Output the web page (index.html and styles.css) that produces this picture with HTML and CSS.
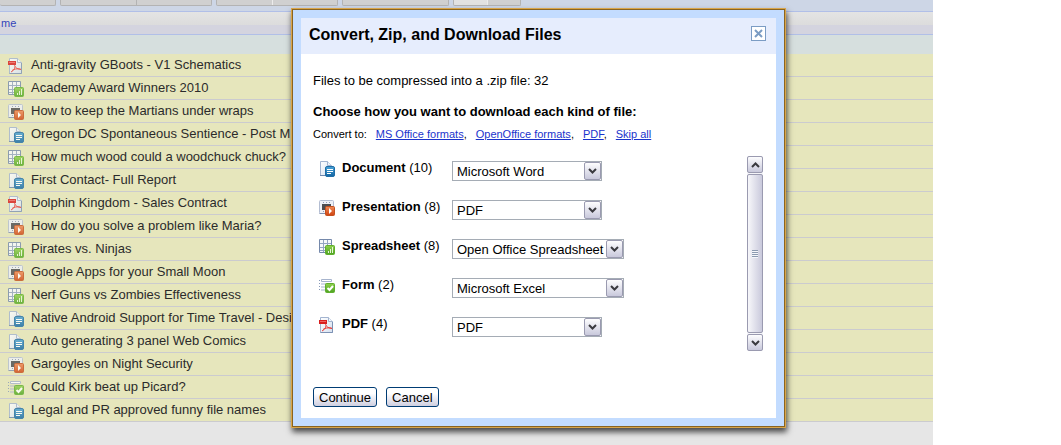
FILE: index.html
```html
<!DOCTYPE html>
<html lang="en">
<head>
    <meta charset="UTF-8">
    <meta name="viewport" content="width=device-width, initial-scale=1.0">
    <title>Convert, Zip, and Download Files</title>

    <link rel="stylesheet" href="styles.css">
</head>
<body>

    <!-- File type icons -->
    <svg class="sprite" width="0" height="0">
        <defs>
            <linearGradient id="blueFill" x1="0" y1="0" x2="0" y2="1"><stop offset="0" stop-color="#4aa3d8"/><stop offset="1" stop-color="#1265a3"/></linearGradient>
            <linearGradient id="orangeFill" x1="0" y1="0" x2="0" y2="1"><stop offset="0" stop-color="#f08a55"/><stop offset="1" stop-color="#cf4310"/></linearGradient>
            <linearGradient id="greenFill" x1="0" y1="0" x2="0" y2="1"><stop offset="0" stop-color="#8fd04c"/><stop offset="1" stop-color="#4ea321"/></linearGradient>
            <linearGradient id="paperFill" x1="0" y1="0" x2="1" y2="1"><stop offset="0" stop-color="#ffffff"/><stop offset="1" stop-color="#d5e0ef"/></linearGradient>
        </defs>
        <symbol id="document" viewBox="0 0 16 16">
            <path d="M1.500 .5h7l4 4v10h-11z" fill="url(#paperFill)" stroke="#a3b4d0"/>
            <path d="M1 14.500h7" stroke="#6b86ad"/>
            <path d="M8.500 .5v4h4" fill="#eef3fa" stroke="#a3b4d0"/>
            <rect x="6.500" y="5.500" width="9" height="10" rx="1.500" fill="url(#blueFill)" stroke="#1f6da6"/>
            <path d="M8 8.500h6M8 10.500h6M8 12.500h4" stroke="#fff"/>
        </symbol>
        <symbol id="presentation" viewBox="0 0 16 16">
            <rect x=".5" y=".5" width="14" height="13" rx="1" fill="#eef0f6" stroke="#b3bdd2"/>
            <path d="M.5 13.500h7" stroke="#8090b0"/>
            <path d="M4 2.500h1M7 2.500h1M10 2.500h1M4 11.500h1" stroke="#8d9bb8"/>
            <rect x="3" y="4" width="9" height="6" fill="#4c4c50"/>
            <rect x="6.500" y="6.500" width="9" height="9" rx="1" fill="url(#orangeFill)" stroke="#c4501f"/>
            <path d="M10 8v6l3-3z" fill="#fff"/>
        </symbol>
        <symbol id="spreadsheet" viewBox="0 0 16 16">
            <path d="M.5 .5h12v13H.5z" fill="#f7f9fc"/>
            <path d="M4.500 0v14M8.500 0v14M0 4.500h13M0 8.500h13M0 11.500h13" stroke="#93a5c2"/>
            <path d="M.5 .5h12v13H.5z" fill="none" stroke="#7589ab"/>
            <rect x="6.500" y="6.500" width="9" height="9" rx="1" fill="url(#greenFill)" stroke="#5fae2d"/>
            <path d="M9.500 12v2M11.500 10v4M13.500 8v6" stroke="#e6f7d8"/>
        </symbol>
        <symbol id="form" viewBox="0 0 16 16">
            <path d="M0 2.500h1M0 5.500h1M0 8.500h1M0 11.500h1" stroke="#8799b8"/>
            <path d="M2.500 1.500h10v2h-10z" fill="#fff" stroke="#a7b4cd"/>
            <path d="M2 6h9M2 9h5M2 12h5" stroke="#a7b4cd"/>
            <rect x="6.500" y="5.500" width="9" height="9" rx="1" fill="url(#greenFill)" stroke="#5fae2d"/>
            <path d="M8.500 10l2 2 3.500-4" fill="none" stroke="#fff" stroke-width="2"/>
        </symbol>
        <symbol id="pdf" viewBox="0 0 16 16">
            <path d="M1.500 .5h8l4 4v11h-12z" fill="url(#paperFill)" stroke="#a3b4d0"/>
            <path d="M9.500 .5v4h4" fill="#f4f7fb" stroke="#a3b4d0"/>
            <path d="M13.500 5v10.500h-12" fill="none" stroke="#7d92b4"/>
            <rect x="0" y="3" width="8" height="4" fill="#d81e1e"/>
            <path d="M1 4.500h6" stroke="#f06060"/>
            <path d="M6.500 7c.5 2 2 4 6.500 4.500M7 8.500c0 2.500-2 4.500-4 5.500M4 12.500c2-1.500 5-2 8.500-1.500" fill="none" stroke="#e83a35"/>
        </symbol>
        <symbol id="down" viewBox="0 0 9 6">
            <path d="M1 1l3.500 3.500L8 1" fill="none" stroke="#3a3a3f" stroke-width="2"/>
        </symbol>
        <symbol id="up" viewBox="0 0 9 6">
            <path d="M1 5l3.500-3.500L8 5" fill="none" stroke="#3a3a3f" stroke-width="2"/>
        </symbol>
    </svg>

    <main class="app">
        <div class="toolbar">
            <span class="group"><i class="w55"></i></span>
            <span class="group"><i class="w75"></i><i class="w75"></i></span>
            <span class="group"><i class="w55"></i><i class="w65 light"></i></span>
            <span class="group"><i class="w105"></i></span>
            <span class="group"><i class="w33 active"></i><i class="w33"></i></span>
        </div>
        <table class="files">
            <thead>
                <tr><th>me</th></tr>
            </thead>
            <tbody>
                <tr class="spacer"><td></td></tr>
                <tr><td><div class="file"><svg><use href="#pdf"/></svg>Anti-gravity GBoots - V1 Schematics</div></td></tr>
                <tr><td><div class="file"><svg><use href="#spreadsheet"/></svg>Academy Award Winners 2010</div></td></tr>
                <tr><td><div class="file"><svg><use href="#presentation"/></svg>How to keep the Martians under wraps</div></td></tr>
                <tr><td><div class="file"><svg><use href="#document"/></svg>Oregon DC Spontaneous Sentience - Post M</div></td></tr>
                <tr><td><div class="file"><svg><use href="#spreadsheet"/></svg>How much wood could a woodchuck chuck?</div></td></tr>
                <tr><td><div class="file"><svg><use href="#document"/></svg>First Contact- Full Report</div></td></tr>
                <tr><td><div class="file"><svg><use href="#pdf"/></svg>Dolphin Kingdom - Sales Contract</div></td></tr>
                <tr><td><div class="file"><svg><use href="#presentation"/></svg>How do you solve a problem like Maria?</div></td></tr>
                <tr><td><div class="file"><svg><use href="#spreadsheet"/></svg>Pirates vs. Ninjas</div></td></tr>
                <tr><td><div class="file"><svg><use href="#presentation"/></svg>Google Apps for your Small Moon</div></td></tr>
                <tr><td><div class="file"><svg><use href="#spreadsheet"/></svg>Nerf Guns vs Zombies Effectiveness</div></td></tr>
                <tr><td><div class="file"><svg><use href="#document"/></svg>Native Android Support for Time Travel - Desig</div></td></tr>
                <tr><td><div class="file"><svg><use href="#document"/></svg>Auto generating 3 panel Web Comics</div></td></tr>
                <tr><td><div class="file"><svg><use href="#presentation"/></svg>Gargoyles on Night Security</div></td></tr>
                <tr><td><div class="file"><svg><use href="#form"/></svg>Could Kirk beat up Picard?</div></td></tr>
                <tr><td><div class="file"><svg><use href="#document"/></svg>Legal and PR approved funny file names</div></td></tr>
            </tbody>
        </table>
    </main>

    <div class="overlay">
        <form class="dialog" role="dialog" aria-labelledby="dialogTitle">
            <div class="title-bar">
                <h2 id="dialogTitle">Convert, Zip, and Download Files</h2>
                <button type="button" class="close" aria-label="Close">
                    <svg viewBox="0 0 9 9"><path d="M1 1l7 7M8 1L1 8" fill="none" stroke="#7b9cc4" stroke-width="2"/></svg>
                </button>
            </div>

            <div class="content">
                <p class="summary">Files to be compressed into a .zip file: 32</p>
                <h3>Choose how you want to download each kind of file:</h3>
                <div class="convert">
                    <span>Convert to:</span>
                    <span><a href="#">MS Office formats</a>,</span>
                    <span><a href="#">OpenOffice formats</a>,</span>
                    <span><a href="#">PDF</a>,</span>
                    <span><a href="#">Skip all</a></span>
                </div>

                <div class="kinds">
                    <div class="kind-list">
                        <div class="kind">
                            <svg><use href="#document"/></svg>
                            <label for="documentFormat"><b>Document</b> (10)</label>
                            <div class="select">
                                <select id="documentFormat"><option>Microsoft Word</option><option>PDF</option></select>
                                <span class="arrow"><svg><use href="#down"/></svg></span>
                            </div>
                        </div>
                        <div class="kind">
                            <svg><use href="#presentation"/></svg>
                            <label for="presentationFormat"><b>Presentation</b> (8)</label>
                            <div class="select">
                                <select id="presentationFormat"><option>PDF</option><option>PowerPoint</option></select>
                                <span class="arrow"><svg><use href="#down"/></svg></span>
                            </div>
                        </div>
                        <div class="kind">
                            <svg><use href="#spreadsheet"/></svg>
                            <label for="spreadsheetFormat"><b>Spreadsheet</b> (8)</label>
                            <div class="select wide">
                                <select id="spreadsheetFormat"><option>Open Office Spreadsheet</option><option>PDF</option></select>
                                <span class="arrow"><svg><use href="#down"/></svg></span>
                            </div>
                        </div>
                        <div class="kind">
                            <svg><use href="#form"/></svg>
                            <label for="formFormat"><b>Form</b> (2)</label>
                            <div class="select wide">
                                <select id="formFormat"><option>Microsoft Excel</option><option>PDF</option></select>
                                <span class="arrow"><svg><use href="#down"/></svg></span>
                            </div>
                        </div>
                        <div class="kind">
                            <svg><use href="#pdf"/></svg>
                            <label for="pdfFormat"><b>PDF</b> (4)</label>
                            <div class="select">
                                <select id="pdfFormat"><option>PDF</option></select>
                                <span class="arrow"><svg><use href="#down"/></svg></span>
                            </div>
                        </div>
                    </div>
                    <div class="scrollbar">
                        <button type="button" aria-label="Scroll up"><svg><use href="#up"/></svg></button>
                        <div class="thumb"><span class="grip"></span></div>
                        <button type="button" aria-label="Scroll down"><svg><use href="#down"/></svg></button>
                    </div>
                </div>

                <div class="actions">
                    <button type="submit">Continue</button>
                    <button type="button">Cancel</button>
                </div>
            </div>
        </form>
    </div>

</body>
</html>
```
FILE: styles.css
```css
* {
    box-sizing: border-box;
}

body {
    margin: 0;
    background-color: white;
    color: black;
    font-family: "Liberation Sans", Arial, sans-serif;
    font-size: 13px;
}

button, select {
    font-family: inherit;
    font-size: 13px;
    color: black;
}

.sprite {
    display: block;
}

.app {
    min-height: 100vh;
    margin-right: 128px;
    background-color: #e6e6e6;
}

/* Toolbar */
.toolbar {
    display: flex;
    gap: 4px;
    height: 11px;
    overflow: hidden;
    background-color: #cdd6e6;
}

.group {
    display: flex;
    height: 6px;
    overflow: hidden;
    border: 1px solid #b3b3b3;
    border-top: none;
    border-radius: 0 0 2px 2px;
    background-color: #d0d0d0;
}

.group:first-child {
    border-left: none;
}

.group i + i {
    border-left: 1px solid #b3b3b3;
}

.group i.light, .group .active + i {
    border-left-color: #ececec;
}

.active {
    background-color: #e2e2e2;
}

.w33 { width: 33px; }
.w55 { width: 55px; }
.w65 { width: 65px; }
.w75 { width: 75px; }
.w105 { width: 105px; }

/* File list */
.files {
    width: 100%;
    border-collapse: separate;
    border-spacing: 0;
    table-layout: fixed;
}

.files th {
    height: 24px;
    padding: 0 1px;
    border-top: 1px solid #b1bfe8;
    border-bottom: 1px solid #b1bfe8;
    background: linear-gradient(#e4e4e4, #dcdcdc 60%, #d4d4df 61%);
    color: #3344bb;
    font-size: 11px;
    font-weight: normal;
    text-align: left;
}

.files td {
    height: 23px;
    padding: 0;
    border-bottom: 1px solid #cbcbcf;
    background-color: #e6e6bc;
    color: #2b2b2b;
}

.files .spacer td {
    height: 19px;
    border-bottom: none;
    background-color: #d6dfde;
}

.file {
    display: flex;
    gap: 7px;
    padding-left: 8px;
    line-height: 20px;
    white-space: nowrap;
}

.file svg, .kind > svg {
    flex: none;
    width: 16px;
    height: 16px;
}

.file svg {
    margin-top: 3px;
    opacity: 0.8;
}

/* Dialog */
.overlay {
    position: absolute;
    top: 8px;
    left: 16px;
    right: 0;
    display: flex;
    justify-content: center;
}

.dialog {
    width: 495px;
    border: 1px solid #d9a54a;
    padding: 1px;
    background-color: #8a6420;
    box-shadow: 1px 4px 6px rgba(0, 0, 0, 0.7);
}

.title-bar {
    display: flex;
    justify-content: space-between;
    align-items: flex-start;
    border: 8px solid #c3dcff;
    border-bottom: none;
    padding: 8px 10px 10px 8px;
    background-color: #e6edfd;
}

h2 {
    margin: 0;
    font-size: 16px;
    line-height: 18px;
}

.close {
    display: flex;
    justify-content: center;
    align-items: center;
    width: 15px;
    height: 15px;
    padding: 0;
    border: 1px solid #7b9cc4;
    background-color: white;
    cursor: pointer;
}

.close svg {
    flex: none;
    width: 9px;
    height: 9px;
}

.content {
    border: 8px solid #c3dcff;
    border-top: none;
    padding: 19px 12px 11px;
    background-color: white;
}

.summary {
    margin: 0 0 15px;
    line-height: 16px;
}

h3 {
    margin: 0 0 7px;
    font-size: 13px;
    line-height: 16px;
}

.convert {
    display: flex;
    gap: 9px;
    margin-bottom: 15px;
    font-size: 11px;
    line-height: 14px;
}

.convert a {
    color: #1a33cc;
}

.kinds {
    display: flex;
    justify-content: space-between;
}

.kind {
    display: flex;
    align-items: flex-start;
    height: 39px;
    padding: 5px 0 0 6px;
}

.kind label {
    width: 117px;
    padding-left: 7px;
    line-height: 14px;
}

.select {
    position: relative;
    width: 150px;
}

.select.wide {
    width: 172px;
}

.select select {
    display: block;
    width: 100%;
    height: 20px;
    padding: 0 18px 0 4px;
    border: 1px solid #a5acb5;
    border-radius: 0;
    background-color: white;
    appearance: none;
}

.arrow {
    position: absolute;
    top: 1px;
    right: 1px;
    display: flex;
    justify-content: center;
    align-items: center;
    width: 17px;
    height: 18px;
    border: 1px solid #9a9ab0;
    border-radius: 2px;
    background: linear-gradient(#fdfdfe, #c9c9dc);
    pointer-events: none;
}

.arrow svg, .scrollbar svg {
    width: 9px;
    height: 6px;
}

/* Scrollbar */
.scrollbar {
    display: flex;
    flex-direction: column;
    gap: 1px;
    width: 16px;
    margin-right: 1px;
    background-color: #f4f4f8;
}

.scrollbar button {
    display: flex;
    justify-content: center;
    align-items: center;
    height: 17px;
    padding: 0;
    border: 1px solid #9a9ab0;
    border-radius: 2px;
    background: linear-gradient(#fdfdfe, #c9c9dc);
}

.thumb {
    flex: 1;
    display: flex;
    justify-content: center;
    align-items: center;
    border: 1px solid #9a9ab0;
    border-radius: 2px;
    background: linear-gradient(90deg, #f7f7fa, #c9c9dc);
}

.grip {
    width: 6px;
    height: 8px;
    background: repeating-linear-gradient(#8c9ab0 0 1px, #f5f7fb 1px 2px);
}

.actions {
    display: flex;
    gap: 9px;
    margin-top: 36px;
}

.actions button {
    height: 20px;
    padding: 0 5px;
    border: 1px solid #003c74;
    border-radius: 3px;
    background: linear-gradient(#ffffff 30%, #f0f0f6 50%, #cfcfe0);
    cursor: pointer;
}
```
